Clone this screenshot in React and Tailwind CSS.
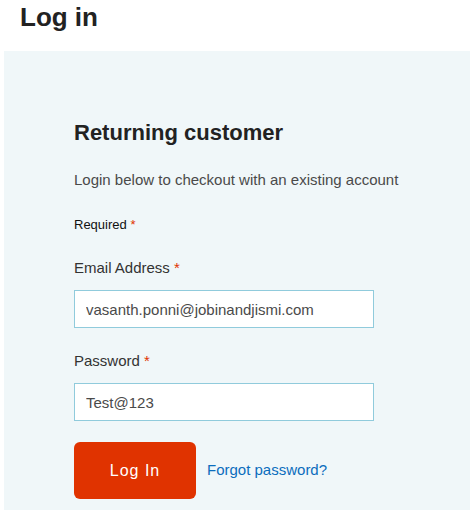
export default function App() {
  return (
    <div className="w-[470px] h-[510px] overflow-hidden bg-white font-['Liberation_Sans',Arial,sans-serif]">
      <h1 className="pl-5 pt-[2px] h-[51px] text-[26px] leading-[30px] font-bold text-[#222]">Log in</h1>
      <div className="ml-1 bg-[#f0f7f9] h-[459px] pl-[70px] pt-[69px]">
        <h2 className="text-[22px] leading-[26px] font-bold text-[#222]">Returning customer</h2>
        <p className="mt-[24px] text-[15px] leading-[20px] text-[#4a4a4a]">
          Login below to checkout with an existing account
        </p>
        <p className="mt-[27px] text-[13px] leading-[16px] text-[#111]">
          Required <span className="text-[#e03300]">*</span>
        </p>
        <label className="block mt-[26px] text-[15px] leading-[18px] text-[#333]">
          Email Address <span className="text-[#e03300]">*</span>
        </label>
        <input
          className="mt-[13px] block w-[300px] h-[38px] border border-[#90cbdc] bg-white px-[11px] text-[15px] text-[#4a4a4a] outline-none"
          defaultValue="vasanth.ponni@jobinandjismi.com"
        />
        <label className="block mt-[24px] text-[15px] leading-[18px] text-[#333]">
          Password <span className="text-[#e03300]">*</span>
        </label>
        <input
          className="mt-[13px] block w-[300px] h-[38px] border border-[#90cbdc] bg-white px-[11px] text-[15px] text-[#4a4a4a] outline-none"
          defaultValue="Test@123"
        />
        <div className="mt-[21px] flex items-center gap-[11px]">
          <button className="w-[122px] h-[57px] rounded-[6px] bg-[#e03300] text-white text-[16px] tracking-[1px]">
            Log In
          </button>
          <a href="#" className="text-[15px] text-[#0b6dbd]">Forgot password?</a>
        </div>
      </div>
    </div>
  )
}
